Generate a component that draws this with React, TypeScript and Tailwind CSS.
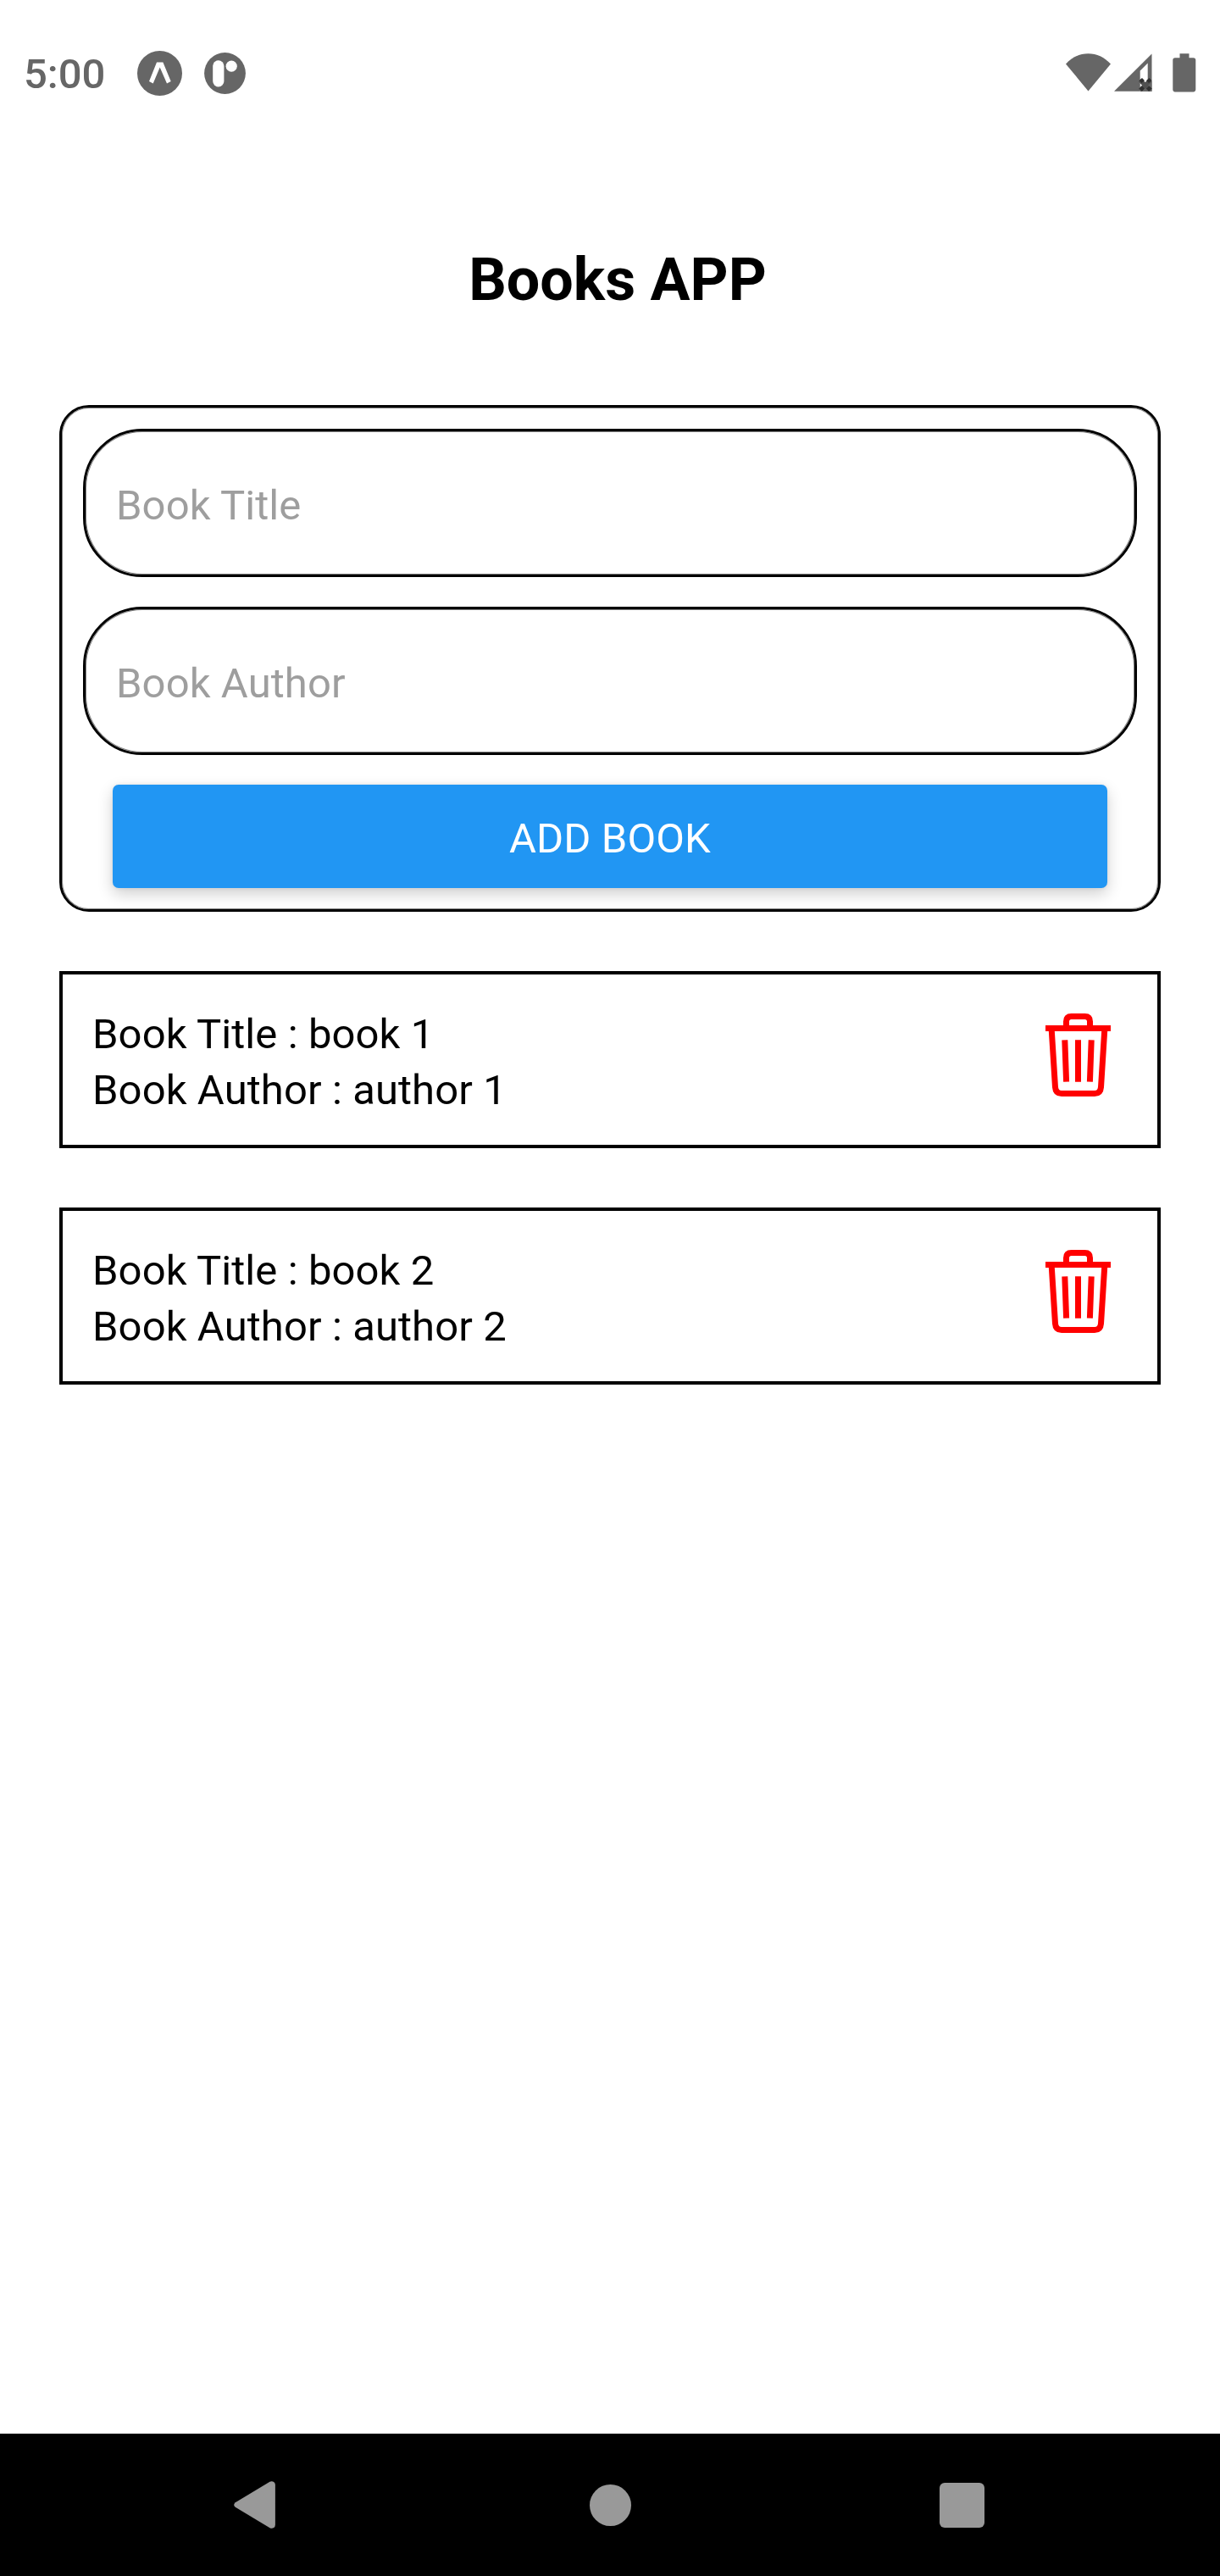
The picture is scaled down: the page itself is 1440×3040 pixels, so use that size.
import React from "react";

const books = [
  { title: "book 1", author: "author 1" },
  { title: "book 2", author: "author 2" },
];

function StatusBar() {
  return (
    <header className="flex h-[172px] items-center justify-between pr-[28px] pl-[28px] text-[#666666]">
      <div className="flex items-center">
        <span className="w-[134px] pt-[3px] text-[49px] leading-[58px] font-medium">5:00</span>
        <svg width="53" height="53" viewBox="0 0 53 53">
          <circle cx="26.5" cy="26.5" r="26.5" fill="#666666" />
          <path d="M23 13.6H30.4L39.7 36 35 38.4 26.7 19.6 18.7 38.4 14 36Z" fill="#fff" />
        </svg>
        <svg className="ml-[26px]" width="49" height="49" viewBox="0 0 49 49">
          <circle cx="24.5" cy="24.5" r="24.4" fill="#666666" />
          <rect x="10.2" y="9.2" width="13.2" height="31.2" rx="6.6" fill="#fff" />
          <circle cx="32.2" cy="16.2" r="6.6" fill="#fff" />
        </svg>
      </div>
      <div className="flex items-start">
        <svg width="53" height="45" viewBox="0 0 53 45">
          <path d="M0 12.4C7.6 4.4 16.500 .200 26.500 .200S45.400 4.400 53 12.400L26.500 44.400Z" fill="#666666" />
        </svg>
        <svg className="ml-[4px]" width="45" height="45" viewBox="0 0 45 45">
          <path fillRule="evenodd" d="M0 44.800L44.500 .500V44.800ZM30.700 20.500V44.800L36 39L39.700 33V11.500Z" fill="#666666" />
          <path d="M30.700 34V44.800H44.500V34Z" fill="#666666" />
          <path d="M31 35.500L34 38.500L31 41.500Z" fill="#fff" />
          <path d="M30.500 31.500L43 43.500M43 31.500L30.500 43.500" stroke="#505050" strokeWidth="5" />
          <path d="M29.500 32L33 29L36 32L32.500 35ZM38 32L41.500 29L44.500 32L41 35ZM29.500 41.500L33 38.500L36 41.500L33 44.500ZM38 41.500L41.500 38.500L44.500 41.500L41 44.500Z" fill="#303030" />
        </svg>
        <svg className="ml-[24px]" width="28" height="46" viewBox="0 0 28 46">
          <path d="M8.500 .300H19.500V5.200H24.500Q27.300 5.200 27.300 8V42.600Q27.300 45.400 24.500 45.400H3Q.300 45.400 .300 42.600V8Q.300 5.200 3 5.200H8.500Z" fill="#666666" />
        </svg>
      </div>
    </header>
  );
}

function Trash() {
  return (
    <svg width="77" height="98" viewBox="0 0 77 98" fill="none" stroke="#ff0000" strokeWidth="7">
      <path d="M24.500 16V9.500Q24.500 3.500 30.500 3.500H46.500Q52.500 3.500 52.500 9.500V16" />
      <path d="M0 17.500H77" />
      <path d="M7.200 19L11.500 87Q12 94.500 19 94.500H58Q65 94.500 65.500 87L69.800 19" />
      <path d="M22.800 31.300L24.600 80.700M38.500 31.300V80.700M54.200 31.300L52.400 80.700" />
    </svg>
  );
}

function Field({ label }: { label: string }) {
  return (
    <input
      placeholder={label}
      className="h-[175px] w-full rounded-[70px] border-[3px] border-black bg-transparent pt-[6px] pl-[36px] text-[49px] tracking-[0.09px] text-black shadow-[inset_0_0_0_1px_#808080] outline-none placeholder:text-[#9e9e9e] placeholder:opacity-100"
    />
  );
}

export default function App() {
  return (
    <div className="flex h-[3040px] w-[1440px] flex-col bg-white font-[Roboto,sans-serif] text-black">
      <StatusBar />
      <main className="flex flex-1 flex-col px-[70px]">
        <h1 className="mt-[117px] pl-[18px] text-center text-[70px] leading-[82px] font-bold">Books APP</h1>
        <form className="mt-[107px] flex h-[598px] flex-col gap-[35px] rounded-[35px] border-[3px] border-black p-[25px] shadow-[inset_0_0_0_1px_#808080]">
          <Field label="Book Title" />
          <Field label="Book Author" />
          <button
            type="button"
            className="mx-[35px] h-[122px] rounded-[7px] bg-[#2196f3] pt-[5px] text-[49px] leading-[58px] tracking-[0.09px] text-white shadow-[0_7px_18px_rgba(0,0,0,0.19),0_0_5px_rgba(0,0,0,0.08)]"
          >
            ADD BOOK
          </button>
        </form>
        <ul className="mt-[70px] flex flex-col gap-[70px]">
          {books.map((book) => (
            <li
              key={book.title}
              className="flex h-[209px] items-start justify-between border-4 border-black pt-[38px] pr-[55px] pl-[35px] text-[49px] leading-[66px] tracking-[0.09px]"
            >
              <div>
                <p>Book Title : {book.title}</p>
                <p>Book Author : {book.author}</p>
              </div>
              <button type="button" aria-label="Delete" className="mt-[8px]">
                <Trash />
              </button>
            </li>
          ))}
        </ul>
      </main>
      <nav className="flex h-[168px] items-center justify-between bg-black pr-[278px] pl-[276px]">
        <svg width="49" height="56" viewBox="0 0 49 56">
          <path d="M1.800 25.200L42.500 .700Q45 -.500 47.200 1Q48.900 2.200 48.900 4.500V51.500Q48.900 53.800 47.200 55Q45 56.500 42.500 55.300L1.800 30.800Q-1.500 28 1.800 25.200Z" fill="#999999" />
        </svg>
        <span className="ml-[6px] h-[49px] w-[49px] rounded-full bg-[#999999]" />
        <span className="h-[53px] w-[53px] rounded-[6px] bg-[#999999]" />
      </nav>
    </div>
  );
}
